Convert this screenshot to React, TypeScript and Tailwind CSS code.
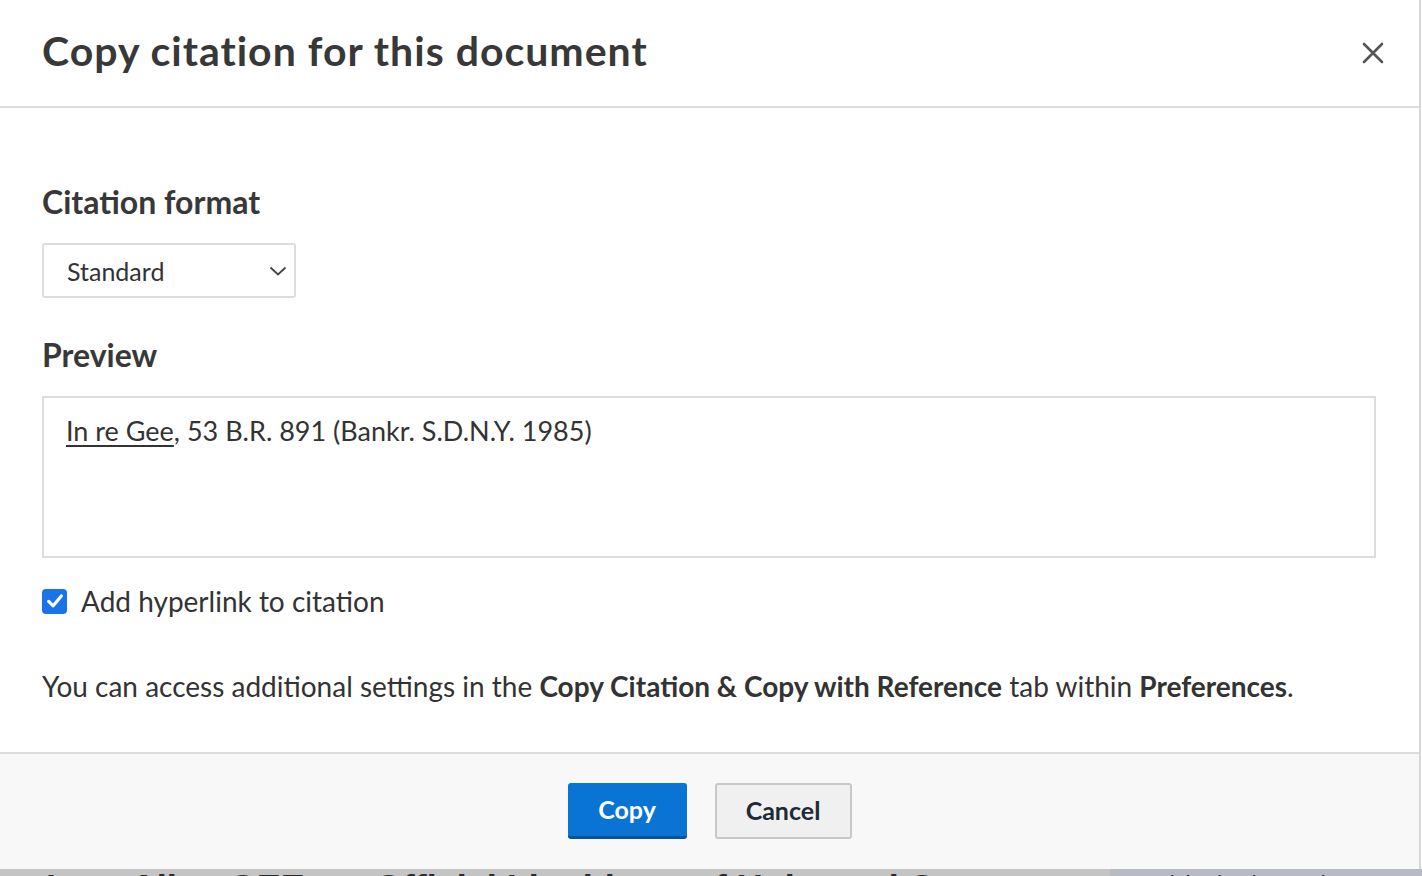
import { useState } from "react"

function CloseIcon() {
  return (
    <svg width="22" height="22" viewBox="0 0 22 22" fill="none">
      <path d="M2 2 L20 20 M20 2 L2 20" stroke="#555555" strokeWidth="2.6" strokeLinecap="round" />
    </svg>
  )
}

function Chevron() {
  return (
    <svg width="18" height="12" viewBox="0 0 18 12" fill="none">
      <path d="M1.5 2.5 L9 9.5 L16.5 2.5" stroke="#444444" strokeWidth="1.8" />
    </svg>
  )
}

export default function App() {
  const [checked, setChecked] = useState(true)

  return (
    <div className="w-[1422px] h-[876px] overflow-hidden bg-white text-[#333333] [font-family:Lato,'Liberation_Sans',sans-serif]">
      <div className="w-[1421px] border-r-2 border-[#d8d8d8] flex flex-col">
        {/* header */}
        <div className="h-[108px] border-b-2 border-[#dcdcdc] flex items-center justify-between pl-[42px] pr-[35px]">
          <h1 className="text-[41px] font-bold leading-[48px] tracking-[1px] text-[#383838] pb-[4px]">
            Copy citation for this document
          </h1>
          <button className="w-[22px] h-[22px] flex items-center justify-center">
            <CloseIcon />
          </button>
        </div>

        {/* body */}
        <div className="px-[42px] pt-[74px] pb-[48px]">
          <div className="text-[32px] font-bold leading-[40px] text-[#383838]">Citation format</div>
          <div className="mt-[21px] w-[254px] h-[55px] border-2 border-[#dddddd] rounded-[3px] flex items-center justify-between pl-[23px] pr-[7px]">
            <span className="text-[25px] leading-[30px] text-[#333333]">Standard</span>
            <Chevron />
          </div>

          <div className="mt-[37px] text-[32px] font-bold leading-[40px] text-[#383838]">Preview</div>
          <div className="mt-[21px] w-[1334px] h-[162px] border-2 border-[#dddddd] pl-[22px] pt-[15px]">
            <div className="text-[27px] leading-[36px] text-[#333333]">
              <span className="underline underline-offset-[4px] decoration-[1.5px]">In re Gee</span>, 53 B.R. 891 (Bankr. S.D.N.Y. 1985)
            </div>
          </div>

          <label className="mt-[25px] flex items-center h-[36px] cursor-pointer">
            <span
              onClick={() => setChecked(!checked)}
              className={
                checked
                  ? "w-[25px] h-[25px] rounded-[4px] bg-[#1a74e8] flex items-center justify-center"
                  : "w-[25px] h-[25px] rounded-[4px] border-2 border-[#767676] bg-white"
              }
            >
              {checked && (
                <svg width="18" height="18" viewBox="0 0 17 17" fill="none">
                  <path d="M2.5 8.8 L6.8 13 L14.5 3.8" stroke="white" strokeWidth="3" strokeLinecap="round" strokeLinejoin="round" />
                </svg>
              )}
            </span>
            <span className="ml-[14px] text-[28px] leading-[36px] text-[#333333]">Add hyperlink to citation</span>
          </label>

          <p className="mt-[49px] text-[28px] leading-[36px] text-[#333333]">
            You can access additional settings in the <b className="font-bold">Copy Citation &amp; Copy with Reference</b> tab within <b className="font-bold">Preferences</b>.
          </p>
        </div>

        {/* footer */}
        <div className="h-[117px] border-t-2 border-[#dcdcdc] bg-[#f8f8f8] flex items-center justify-center gap-[28px] pb-[2px]">
          <button className="w-[119px] h-[56px] rounded-[3px] bg-[#0a74d4] border-b-[3px] border-[#07539a] text-white text-[25px] font-bold leading-none">
            Copy
          </button>
          <button className="w-[137px] h-[56px] rounded-[3px] bg-[#f0f0f0] border-2 border-[#c8c8c8] text-[#1f2a36] text-[25px] font-bold leading-none">
            Cancel
          </button>
        </div>
      </div>

      {/* page behind the dialog */}
      <div className="h-[20px] bg-[#c4c4c4] flex overflow-hidden">
        <div className="w-[1110px] pl-[46px] text-[36px] font-bold leading-[40px] text-[#2a2a2a] whitespace-nowrap [font-family:'Liberation_Sans',sans-serif]">
          In re Allan GEE, as Official Liquidator of Universal Casua
        </div>
        <div className="flex-1 bg-[#b8bcc2] pl-[30px] text-[22px] leading-[28px] text-[#2a2a2a] whitespace-nowrap">
          Quick Check for relevant
        </div>
      </div>
    </div>
  )
}
